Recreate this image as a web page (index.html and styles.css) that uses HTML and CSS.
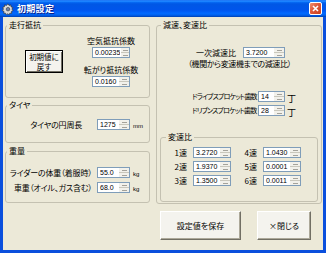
FILE: index.html
```html
<!DOCTYPE html>
<html lang="ja">
<head>
    <meta charset="UTF-8">
    <title>初期設定</title>
    <link rel="stylesheet" href="styles.css">
</head>
<body>
    <div class="window">
        <div class="titlebar">
            <svg class="app-icon" width="12" height="12" viewBox="0 0 12 12">
                <path d="M6 0.8l1 1.6 1.8-.5.2 1.9 1.8.7-.9 1.6 1.2 1.4-1.7.9.3 1.9-1.9-.1-.8 1.7L6 10.7l-1.6 1.2-.8-1.7-1.9.1.3-1.9-1.7-.9L1.5 6.1.6 4.5l1.8-.7.2-1.9 1.8.5z" fill="#d9d9d9" stroke="#333" stroke-width=".7"/>
                <circle cx="6" cy="6.2" r="1.8" fill="#6b7fa8" stroke="#222" stroke-width=".5"/>
            </svg>
            <span class="title">初期設定</span>
            <span class="close-btn">
                <svg width="7" height="7" viewBox="0 0 7 7"><path d="M1 1l5 5M6 1L1 6" stroke="#fff" stroke-width="1.6"/></svg>
            </span>
        </div>

        <div class="frame">
            <div class="client">
                <!-- left column -->
                <div class="col-left">
                    <fieldset class="group group-resist">
                        <legend>走行抵抗</legend>
                        <div class="resist-body">
                            <button class="btn btn-reset">初期値に<br>戻す</button>
                            <div class="coef-col">
                                <span class="lbl">空気抵抗係数</span>
                                <span class="spin spin-coef"><span class="spin-val">0.00235</span><span class="spin-btns"><i></i><i></i></span></span>
                                <span class="lbl lbl-roll">転がり抵抗係数</span>
                                <span class="spin spin-coef"><span class="spin-val">0.0160</span><span class="spin-btns"><i></i><i></i></span></span>
                            </div>
                        </div>
                    </fieldset>

                    <fieldset class="group group-tire">
                        <legend>タイヤ</legend>
                        <div class="field-row row-tire">
                            <span class="lbl lbl-left lbl-tire">タイヤの円周長</span>
                            <span class="spin spin-small"><span class="spin-val">1275</span><span class="spin-btns"><i></i><i></i></span></span>
                            <span class="unit">mm</span>
                        </div>
                    </fieldset>

                    <fieldset class="group group-weight">
                        <legend>重量</legend>
                        <div class="field-row row-rider">
                            <span class="lbl lbl-left">ライダーの体重（着服時）</span>
                            <span class="spin spin-small"><span class="spin-val">55.0</span><span class="spin-btns"><i></i><i></i></span></span>
                            <span class="unit">kg</span>
                        </div>
                        <div class="field-row row-bike">
                            <span class="lbl lbl-left">車重（オイル、ガス含む）</span>
                            <span class="spin spin-small"><span class="spin-val">68.0</span><span class="spin-btns"><i></i><i></i></span></span>
                            <span class="unit">kg</span>
                        </div>
                    </fieldset>
                </div>

                <!-- right column -->
                <div class="col-right">
                    <fieldset class="group group-gear">
                        <legend>減速、変速比</legend>
                        <div class="field-row row-primary">
                            <span class="lbl lbl-primary">一次減速比</span>
                            <span class="spin spin-primary"><span class="spin-val">3.7200</span><span class="spin-btns"><i></i><i></i></span></span>
                        </div>
                        <div class="note">（機関から変速機までの減速比）</div>
                        <div class="field-row row-sprocket row-drive">
                            <span class="lbl lbl-sprocket">ドライブスプロケット歯数</span>
                            <span class="spin spin-teeth"><span class="spin-val">14</span><span class="spin-btns"><i></i><i></i></span></span>
                            <span class="unit-t">丁</span>
                        </div>
                        <div class="field-row row-sprocket row-driven">
                            <span class="lbl lbl-sprocket">ドリブンスプロケット歯数</span>
                            <span class="spin spin-teeth"><span class="spin-val">28</span><span class="spin-btns"><i></i><i></i></span></span>
                            <span class="unit-t">丁</span>
                        </div>

                        <fieldset class="group group-shift">
                            <legend>変速比</legend>
                            <div class="shift-grid">
                                <span class="lbl gear-lbl">1速</span>
                                <span class="spin"><span class="spin-val">3.2720</span><span class="spin-btns"><i></i><i></i></span></span>
                                <span class="lbl gear-lbl">4速</span>
                                <span class="spin"><span class="spin-val">1.0430</span><span class="spin-btns"><i></i><i></i></span></span>

                                <span class="lbl gear-lbl">2速</span>
                                <span class="spin"><span class="spin-val">1.9370</span><span class="spin-btns"><i></i><i></i></span></span>
                                <span class="lbl gear-lbl">5速</span>
                                <span class="spin"><span class="spin-val">0.0001</span><span class="spin-btns"><i></i><i></i></span></span>

                                <span class="lbl gear-lbl">3速</span>
                                <span class="spin"><span class="spin-val">1.3500</span><span class="spin-btns"><i></i><i></i></span></span>
                                <span class="lbl gear-lbl">6速</span>
                                <span class="spin"><span class="spin-val">0.0011</span><span class="spin-btns"><i></i><i></i></span></span>
                            </div>
                        </fieldset>
                    </fieldset>

                    <div class="actions">
                        <button class="btn btn-save">設定値を保存</button>
                        <button class="btn btn-close">×閉じる</button>
                    </div>
                </div>
            </div>
        </div>
    </div>
</body>
</html>
```

FILE: styles.css
```css
:root {
    --face: #ECE9D8;
    --group-line: #C4C1B1;
    --field-line: #7F9DB9;
    --xp-blue: #0A4FDD;
}

body {
    margin: 0;
    font-family: "Noto Sans CJK JP", sans-serif;
    font-size: 8px;
    font-feature-settings: "palt";
    color: #000;
}

.window {
    width: 326px;
    height: 253px;
    background: var(--xp-blue);
    display: flex;
    flex-direction: column;
}

/* title bar */
.titlebar {
    height: 17px;
    flex: none;
    display: flex;
    align-items: center;
    padding: 0 4px 0 2px;
    background: linear-gradient(#0058EE 0%, #3593FF 5%, #127DFF 10%, #0262EE 16%, #0057E5 24%, #0055EB 56%, #005BF5 66%, #026AFE 78%, #0062EF 88%, #0052D6 94%, #0040AB 100%);
}

.app-icon {
    flex: none;
}

.title {
    margin-left: 3px;
    color: #fff;
    font-weight: bold;
    font-size: 9px;
    letter-spacing: 0.3px;
    text-shadow: 1px 1px 0 #0A1E8A;
}

.close-btn {
    margin-left: auto;
    width: 13px;
    height: 13px;
    box-sizing: border-box;
    border: 1px solid #fff;
    border-radius: 2px;
    background: linear-gradient(135deg, #F0906E 0%, #E0583A 45%, #C8401E 100%);
    display: flex;
    align-items: center;
    justify-content: center;
}

.frame {
    flex: 1;
    padding: 0 3px 3px;
    display: flex;
}

.client {
    flex: 1;
    background: var(--face);
    display: flex;
    gap: 6px;
    padding: 3px 1px 0 2px;
}

/* group boxes */
.group {
    margin: 0;
    padding: 0;
    border: 1px solid var(--group-line);
    border-radius: 3px;
    box-sizing: border-box;
    min-width: 0;
}

.group legend {
    padding: 0 2px;
    margin-left: 1px;
    line-height: 10px;
    font-size: 8px;
}

.col-left {
    width: 145px;
    display: flex;
    flex-direction: column;
}

.col-right {
    width: 166px;
    display: flex;
    flex-direction: column;
}

.lbl {
    line-height: 10px;
    white-space: nowrap;
}

/* spin boxes */
.spin {
    display: flex;
    width: 38px;
    height: 11px;
    box-sizing: border-box;
    border: 1px solid var(--field-line);
    background: #fff;
}

.spin-val {
    flex: 1;
    padding-left: 2px;
    font-family: "Liberation Sans", sans-serif;
    font-size: 7px;
    line-height: 9px;
}

.spin-btns {
    width: 10px;
    display: flex;
    flex-direction: column;
    background: #F2F1EB;
    border-left: 1px solid #fff;
}

.spin-btns i {
    flex: 1;
    display: flex;
    align-items: center;
    justify-content: center;
}

.spin-btns i + i {
    border-top: 1px solid #C9C7BC;
}

.spin-btns i::after {
    content: "";
    width: 5px;
    height: 1px;
    background: #A4A29A;
}

.spin-coef { width: 38px; }
.spin-small { width: 33px; }
.spin-primary { width: 42px; }
.spin-teeth { width: 27px; }

/* buttons */
.btn {
    font-family: "Noto Sans CJK JP", sans-serif;
    font-size: 8px;
    font-feature-settings: "palt";
    color: #000;
    background: #F4F3EE;
    border: 1px solid;
    border-color: #fff #716F64 #716F64 #fff;
    box-shadow: inset -1px -1px 0 #ACA899;
    padding: 0;
    cursor: pointer;
}

/* 走行抵抗 */
.group-resist {
    height: 78px;
}

.resist-body {
    display: flex;
    align-items: flex-start;
    padding: 6px 0 0 19px;
}

.btn-reset {
    margin-top: 14px;
    width: 38px;
    height: 23px;
    font-size: 7.5px;
    line-height: 10px;
    border: 1px solid #000;
    box-shadow: inset 1px 1px 0 #fff, inset -1px -1px 0 #716F64;
}

.coef-col {
    margin-left: 23px;
    width: 50px;
    display: flex;
    flex-direction: column;
    align-items: center;
}

.coef-col .spin {
    margin-top: 1px;
}

.lbl-roll {
    margin-top: 7px;
}

/* rows with label + spin + unit */
.field-row {
    display: flex;
    align-items: center;
}

.lbl-left {
    width: 91px;
    box-sizing: border-box;
    text-align: right;
    padding-right: 5px;
    letter-spacing: -0.2px;
}

.lbl-tire {
    padding-right: 15px;
}

.unit {
    align-self: flex-end;
    margin-left: 3px;
    font-family: "Liberation Sans", sans-serif;
    font-size: 6px;
    line-height: 7px;
}

.group-tire {
    margin-top: 2px;
    height: 43px;
}

.row-tire {
    margin-top: 9px;
}

.group-weight {
    margin-top: 3px;
    height: 57px;
}

.row-rider {
    margin-top: 11px;
}

.row-bike {
    margin-top: 4px;
}

/* 減速、変速比 */
.group-gear {
    height: 184px;
}

.group-gear > legend {
    margin-left: 4px;
}

.row-primary {
    margin-top: 17px;
    padding-left: 39px;
}

.lbl-primary {
    width: 47px;
}

.note {
    margin-top: 1px;
    padding-left: 31px;
    line-height: 10px;
    white-space: nowrap;
    letter-spacing: -0.4px;
}

.row-sprocket {
    align-items: flex-start;
    padding-left: 35px;
}

.row-drive {
    margin-top: 22px;
}

.row-driven {
    margin-top: 1px;
}

.lbl-sprocket {
    width: 66px;
    font-size: 7px;
    letter-spacing: -0.85px;
}

.unit-t {
    margin: 3px 0 0 2px;
    font-size: 9px;
    line-height: 10px;
}

.group-shift {
    margin: 14px 3px 0;
    height: 70px;
}

.group-shift legend {
    margin-left: 5px;
}

.shift-grid {
    display: grid;
    grid-template-columns: 32px 38px 32px 40px;
    row-gap: 3px;
    padding-top: 5px;
    align-items: center;
}

.gear-lbl {
    text-align: right;
    padding-right: 6px;
}

/* bottom buttons */
.actions {
    display: flex;
    gap: 16px;
    margin-top: 7px;
    padding-left: 4px;
}

.btn-save {
    width: 81px;
    height: 29px;
}

.btn-close {
    width: 54px;
    height: 29px;
}
```
